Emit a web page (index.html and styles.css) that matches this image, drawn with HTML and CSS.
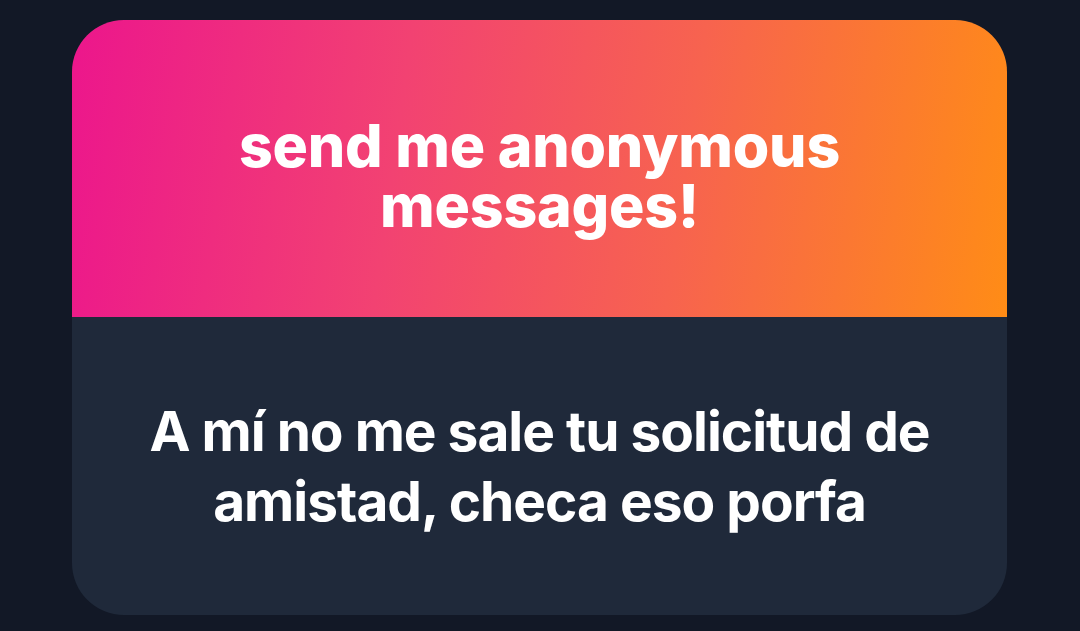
FILE: index.html
```html
<!DOCTYPE html>
<html>
<head>
<meta charset="utf-8">
<link rel="stylesheet" href="styles.css">
</head>
<body>
<div class="card">
  <div class="head">
    <h1 class="title">send me anonymous<br>messages!</h1>
  </div>
  <div class="body">
    <p class="msg">A mí no me sale tu solicitud de<br>amistad, checa eso porfa</p>
  </div>
</div>
</body>
</html>
```

FILE: styles.css
```css
html, body {
  margin: 0;
  padding: 0;
  background: #121826;
  width: 1080px;
  height: 631px;
  overflow: hidden;
}
body {
  padding: 20px 0 0 72px;
  box-sizing: border-box;
}
.card {
  width: 935px;
  height: 595px;
  border-radius: 52px;
  overflow: hidden;
  display: flex;
  flex-direction: column;
  background: #1f293a;
}
.head {
  height: 297px;
  background: linear-gradient(98deg, #ec168c 0%, #f24272 35%, #f7634f 65%, #ff8c16 100%);
  display: flex;
  align-items: center;
  justify-content: center;
  padding-top: 14px;
  box-sizing: border-box;
}
.title {
  margin: 0;
  color: #fff;
  font-family: Inter, "Open Sans", sans-serif;
  font-weight: 800;
  font-size: 59px;
  line-height: 60px;
  letter-spacing: -0.2px;
  text-align: center;
}
.body {
  flex: 1;
  display: flex;
  align-items: center;
  justify-content: center;
}
.msg {
  margin: 0;
  color: #fff;
  font-family: Inter, "Open Sans", sans-serif;
  font-weight: 700;
  font-size: 55px;
  line-height: 70px;
  letter-spacing: -1px;
  text-align: center;
}
```
